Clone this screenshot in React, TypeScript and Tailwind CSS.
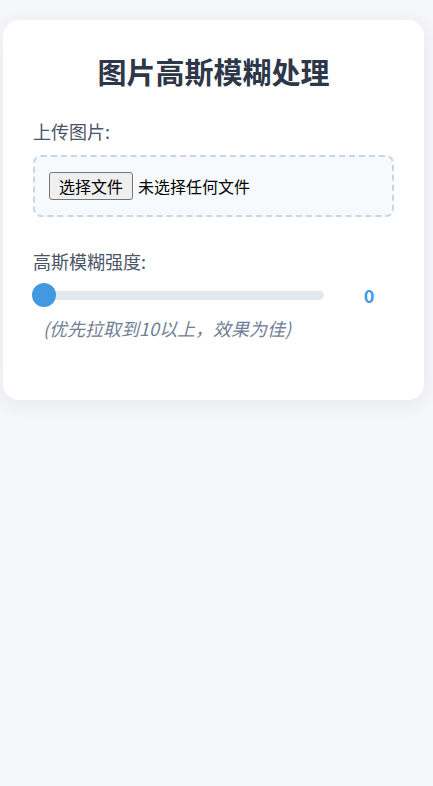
import React from "react";

export default function App() {
  const font = { fontFamily: '"Noto Sans CJK SC", "Noto Sans", sans-serif' };
  return (
    <div className="min-h-[786px] w-full bg-[#f5f6fa] pt-[20px]" style={font}>
      <div className="ml-[3px] mr-[9px] rounded-[16px] bg-white px-[30px] pt-[30px] pb-[30px] shadow-[0_4px_20px_rgba(0,0,0,0.06)]">
        <h1 className="mb-[25px] text-center text-[29px] font-bold leading-[43px] text-[#2d3748]">
          图片高斯模糊处理
        </h1>

        <div className="mb-[31px]">
          <div className="mb-[10px] text-[18px] leading-[27px] text-[#4a5568]">上传图片:</div>
          <div className="flex items-center rounded-[8px] border-2 border-dashed border-[#cbd5e0] bg-[#f7fafc] px-[14px] py-[15px]">
            <button className="h-[28px] rounded-[3px] border border-[#767676] bg-[#efefef] px-[9px] text-[16px] leading-[26px] text-black">
              选择文件
            </button>
            <span className="ml-[5px] text-[16px] leading-[28px] text-black">未选择任何文件</span>
          </div>
        </div>

        <div className="mb-[28px]">
          <div className="mb-[8px] text-[18px] leading-[27px] text-[#4a5568]">高斯模糊强度:</div>
          <div className="flex h-[24px] items-center">
            <div className="relative h-[9px] w-[292px] rounded-full bg-[#e2e8f0]">
              <div className="absolute left-[-1px] top-1/2 h-[24px] w-[24px] -translate-y-1/2 rounded-full bg-[#4299e1]" />
            </div>
            <div className="ml-[20px] w-[50px] text-center text-[18px] font-bold leading-[24px] text-[#4299e1]">0</div>
          </div>
          <div className="ml-[10px] mt-[8px] text-[18px] italic leading-[27px] text-[#718096]">
            (优先拉取到10以上，效果为佳)
          </div>
        </div>
      </div>
    </div>
  );
}
